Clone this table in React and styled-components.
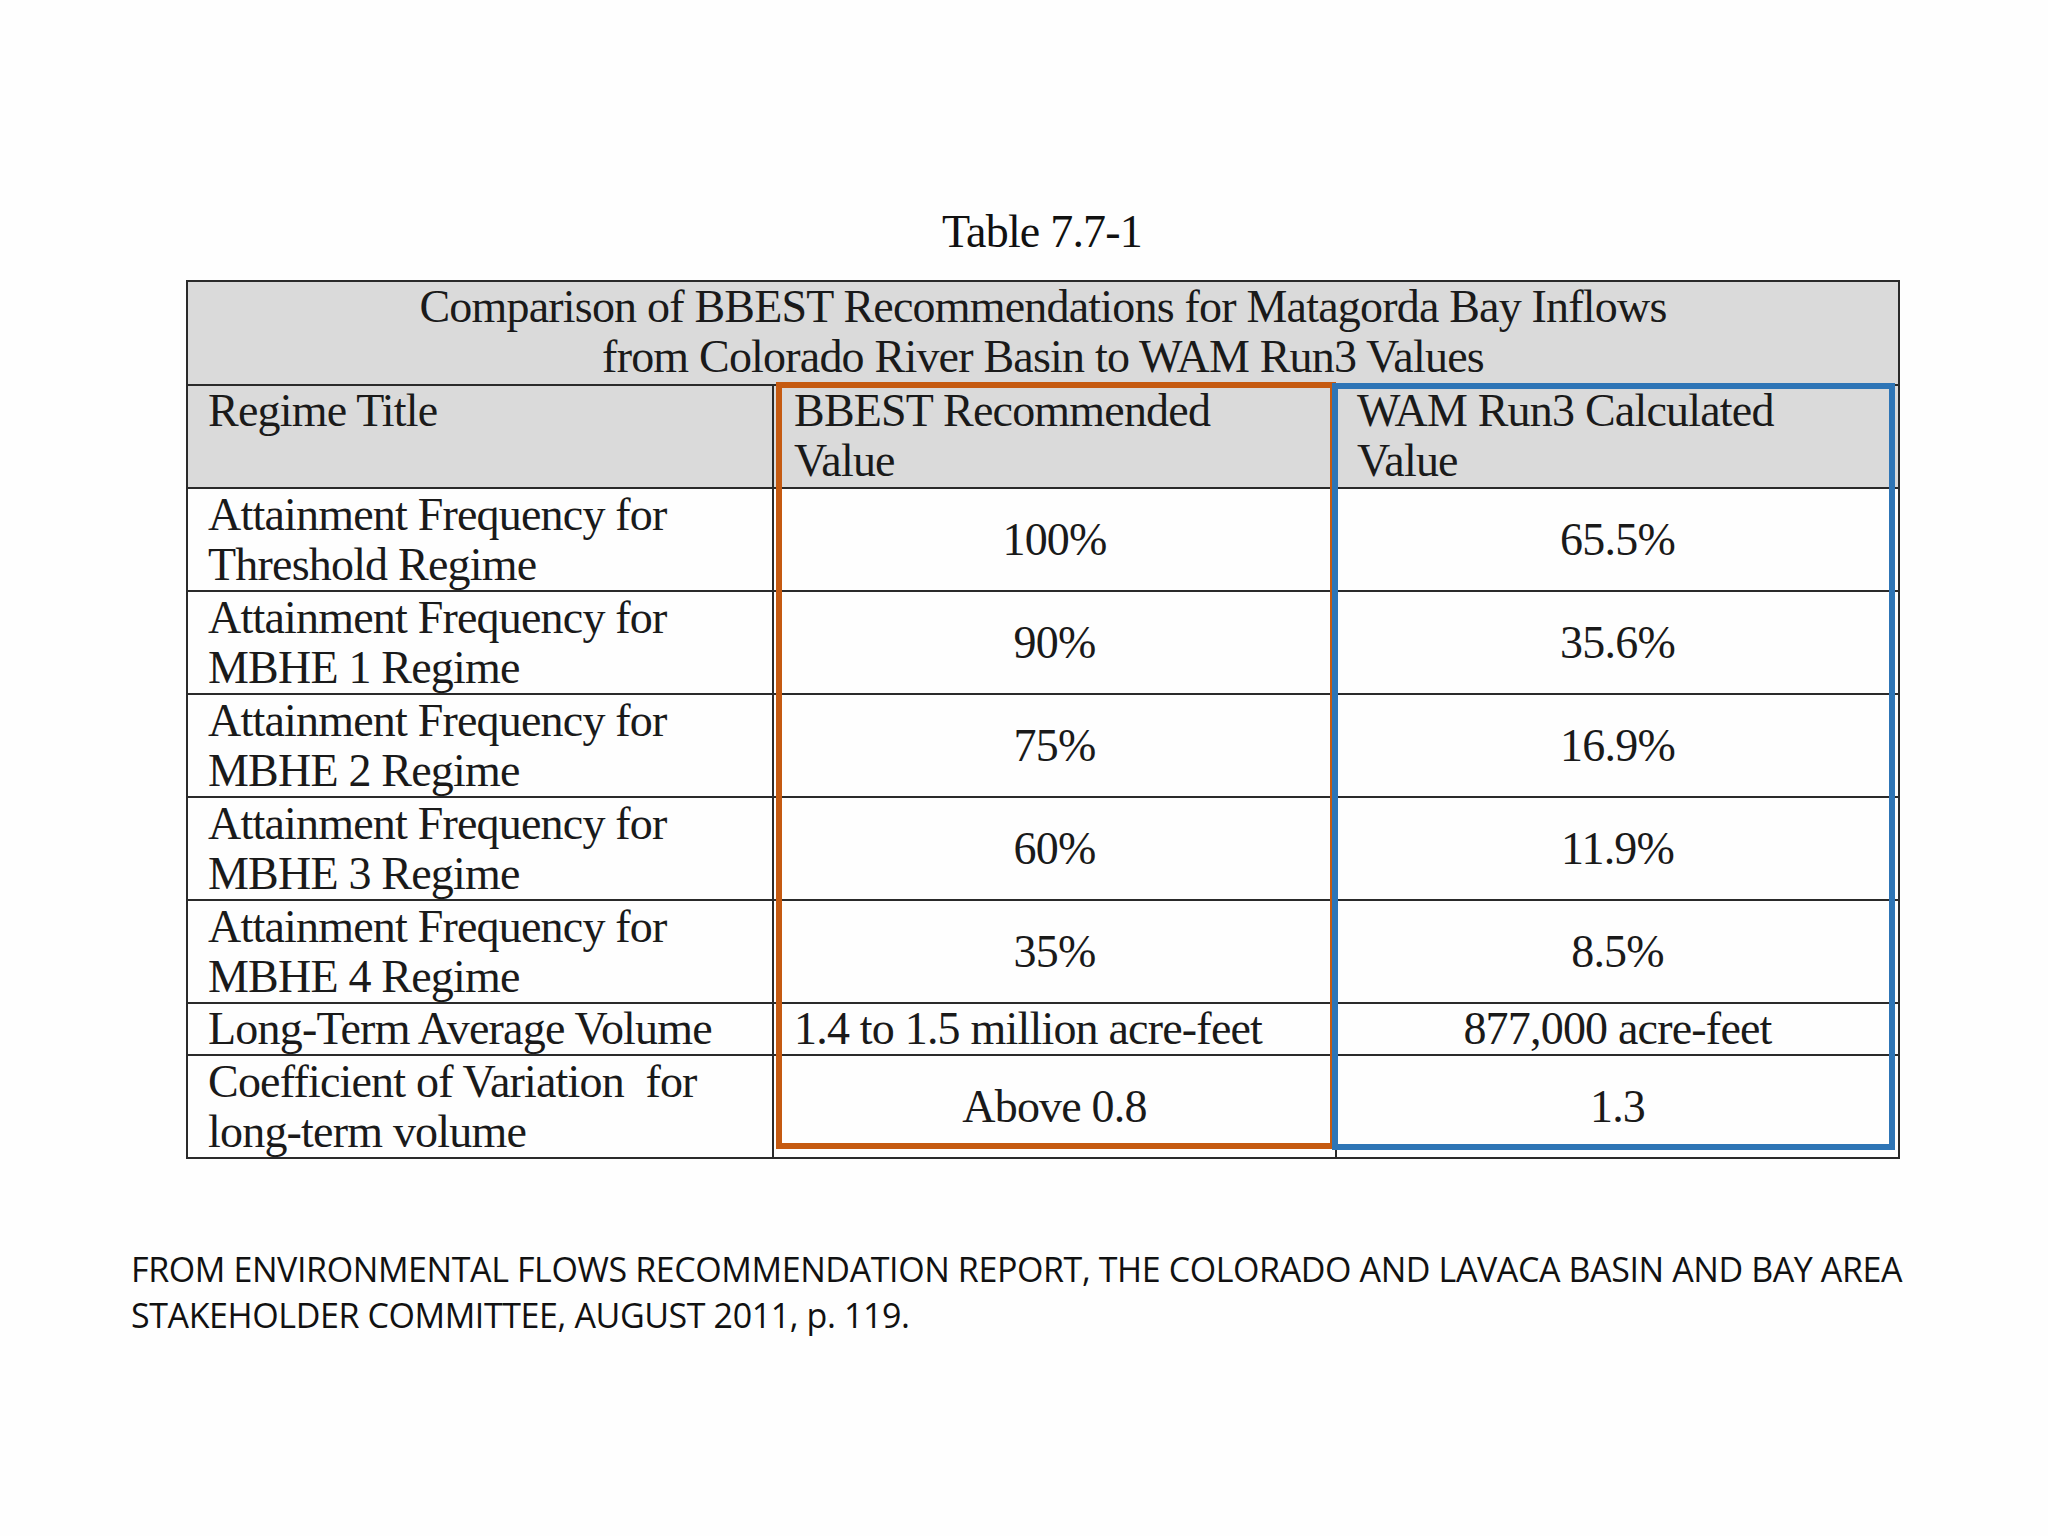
import React from 'react';
import styled, { createGlobalStyle } from 'styled-components';

const GlobalStyle = createGlobalStyle`
  html, body {
    margin: 0;
    padding: 0;
    background: #fefefe;
  }
`;

const Slide = styled.div`
  width: 2048px;
  height: 1536px;
  box-sizing: border-box;
  padding: 204px 0 0 186px;
  display: flex;
  flex-direction: column;
  color: #111;
`;

const Caption = styled.div`
  width: 1712px;
  text-align: center;
  font-family: "Liberation Serif", serif;
  font-size: 46px;
  letter-spacing: -0.8px;
  line-height: 56px;
  margin-bottom: 20px;
`;

const TableWrap = styled.div`
  position: relative;
  width: 1712px;
`;

const Grid = styled.table`
  width: 1712px;
  border-collapse: collapse;
  table-layout: fixed;
  font-family: "Liberation Serif", serif;
  font-size: 46px;
  letter-spacing: -0.8px;
  line-height: 50px;
  color: #1a1a1a;
`;

const Cell = styled.td`
  border: 2px solid #2a2a2a;
  padding: 0 20px;
  height: ${({ $h }) => $h}px;
  box-sizing: border-box;
  background: ${({ $gray }) => ($gray ? '#dadada' : '#fefefe')};
  text-align: ${({ $align }) => $align || 'left'};
  vertical-align: ${({ $valign }) => $valign || 'middle'};
  white-space: pre;
`;

const Highlight = styled.div`
  position: absolute;
  top: ${({ $top }) => $top}px;
  left: ${({ $left }) => $left}px;
  width: ${({ $w }) => $w}px;
  height: ${({ $h }) => $h}px;
  border: 6px solid ${({ $color }) => $color};
  box-sizing: border-box;
  pointer-events: none;
`;

const Source = styled.div`
  margin: 87px 0 0 -55px;
  font-family: "Open Sans", sans-serif;
  font-size: 34px;
  letter-spacing: -0.4px;
  line-height: 46px;
  color: #111;
`;

const rows = [
  { label: 'Attainment Frequency for\nThreshold Regime', bbest: '100%', wam: '65.5%' },
  { label: 'Attainment Frequency for\nMBHE 1 Regime', bbest: '90%', wam: '35.6%' },
  { label: 'Attainment Frequency for\nMBHE 2 Regime', bbest: '75%', wam: '16.9%' },
  { label: 'Attainment Frequency for\nMBHE 3 Regime', bbest: '60%', wam: '11.9%' },
  { label: 'Attainment Frequency for\nMBHE 4 Regime', bbest: '35%', wam: '8.5%' },
];

export default function App() {
  return (
    <>
      <GlobalStyle />
      <Slide>
        <Caption>Table 7.7-1</Caption>
        <TableWrap>
          <Grid>
            <colgroup>
              <col style={{ width: 586 }} />
              <col style={{ width: 563 }} />
              <col style={{ width: 563 }} />
            </colgroup>
            <tbody>
              <tr>
                <Cell colSpan={3} $gray $h={104} $align="center" $valign="top">
                  {'Comparison of BBEST Recommendations for Matagorda Bay Inflows\nfrom Colorado River Basin to WAM Run3 Values'}
                </Cell>
              </tr>
              <tr>
                <Cell $gray $h={103} $valign="top">Regime Title</Cell>
                <Cell $gray $h={103} $valign="top">{'BBEST Recommended\nValue'}</Cell>
                <Cell $gray $h={103} $valign="top">{'WAM Run3 Calculated\nValue'}</Cell>
              </tr>
              {rows.map(({ label, bbest, wam }) => (
                <tr key={label}>
                  <Cell $h={103}>{label}</Cell>
                  <Cell $h={103} $align="center">{bbest}</Cell>
                  <Cell $h={103} $align="center">{wam}</Cell>
                </tr>
              ))}
              <tr>
                <Cell $h={52}>Long-Term Average Volume</Cell>
                <Cell $h={52}>1.4 to 1.5 million acre-feet</Cell>
                <Cell $h={52} $align="center">877,000 acre-feet</Cell>
              </tr>
              <tr>
                <Cell $h={103}>{'Coefficient of Variation  for\nlong-term volume'}</Cell>
                <Cell $h={103} $align="center">Above 0.8</Cell>
                <Cell $h={103} $align="center">1.3</Cell>
              </tr>
            </tbody>
          </Grid>
          <Highlight $color="#c55a11" $left={590} $top={102} $w={560} $h={767} />
          <Highlight $color="#2e75b6" $left={1146} $top={103} $w={563} $h={767} />
        </TableWrap>
        <Source>
          FROM ENVIRONMENTAL FLOWS RECOMMENDATION REPORT, THE COLORADO AND LAVACA BASIN AND BAY AREA
          <br />
          STAKEHOLDER COMMITTEE, AUGUST 2011, p. 119.
        </Source>
      </Slide>
    </>
  );
}
